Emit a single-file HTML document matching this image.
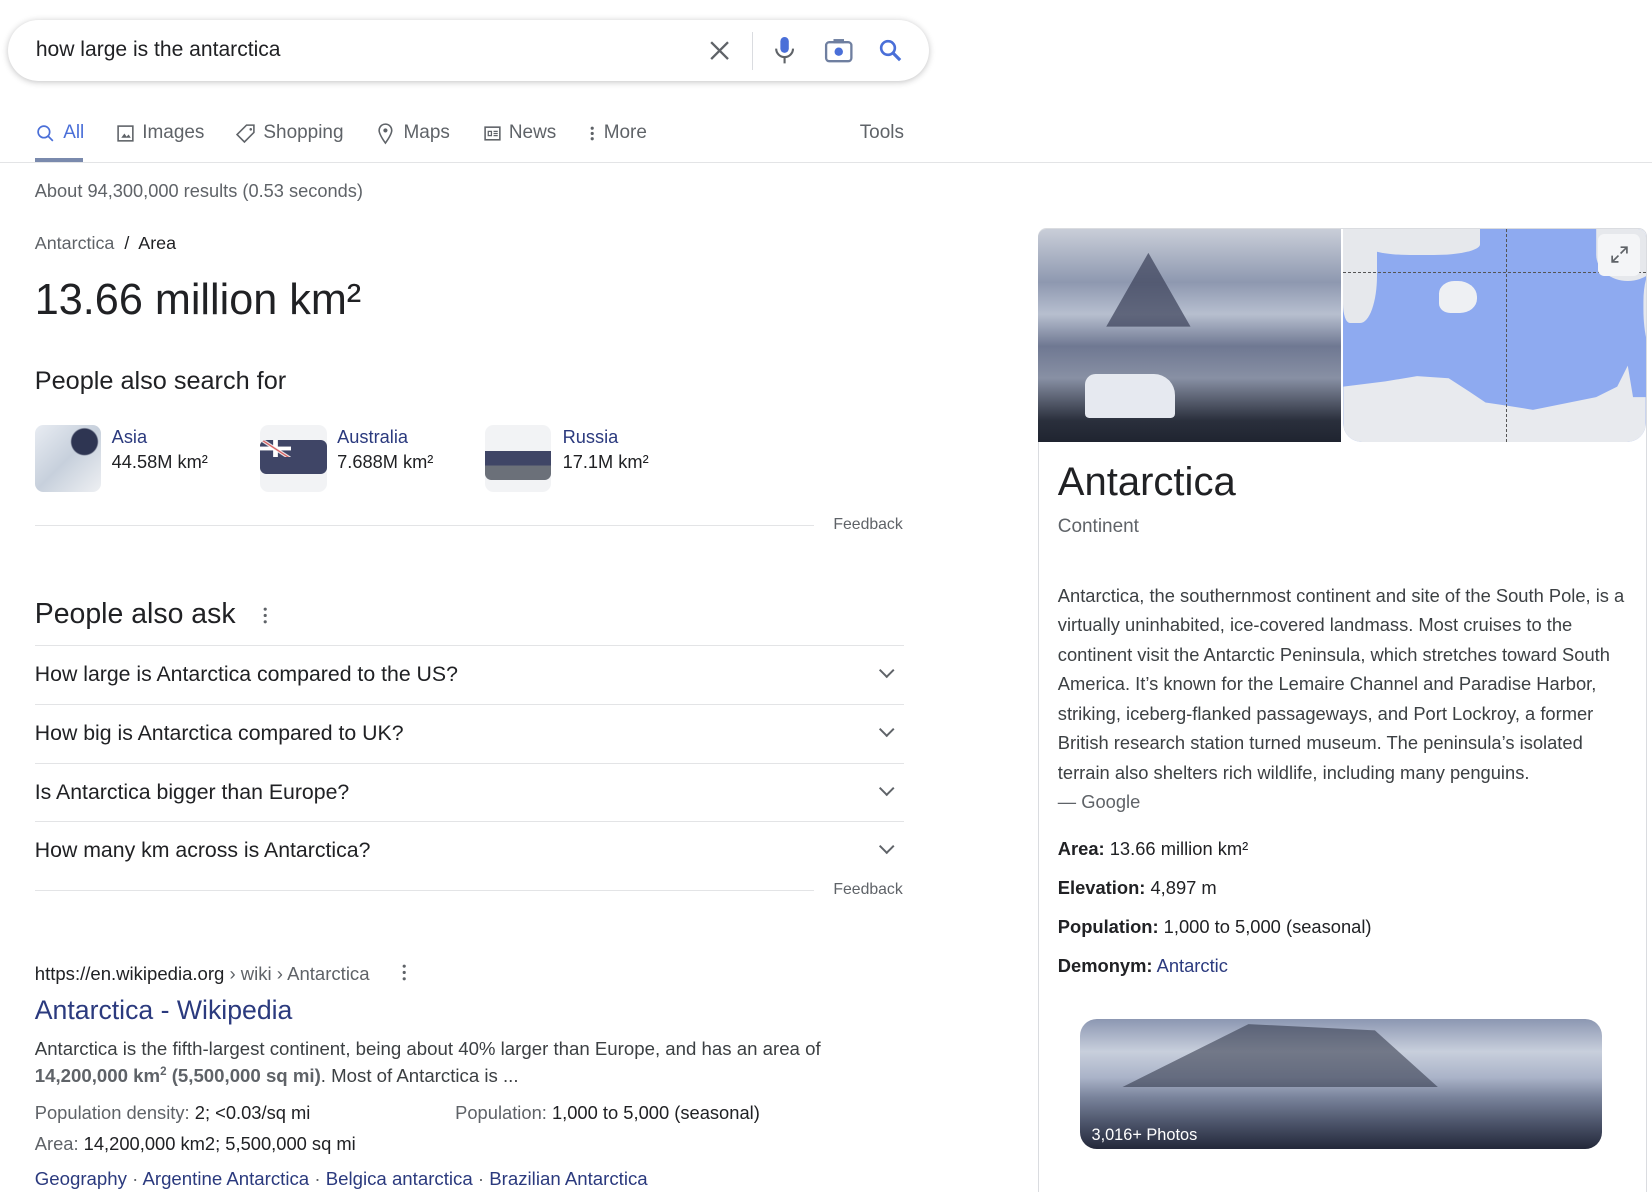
<!DOCTYPE html>
<html><head><meta charset="utf-8"><style>
html,body{margin:0;padding:0;background:#fff;overflow:hidden}
body{width:1568px;height:1131px;zoom:1.05357;position:relative;font-family:"Liberation Sans",Arial,sans-serif;color:#202124}
.a{position:absolute;white-space:nowrap}
.g{color:#5f6368}
.l{color:#2b3a7e}
.hr{position:absolute;height:1px;background:#e3e4e6}
.q{font-size:20.2px}
.chev{position:absolute;left:836px;width:9px;height:9px;border-right:2px solid #5f6368;border-bottom:2px solid #5f6368;transform:rotate(45deg)}
</style></head><body>
<div class="a" style="left:8px;top:19px;width:874px;height:58px;border-radius:29px;box-shadow:0 1px 6px rgba(32,33,36,.28);background:#fff"></div>
<div class="a" style="left:34px;top:36px;font-size:20px">how large is the antarctica</div>
<svg class="a" style="left:672px;top:37px" width="22" height="22" viewBox="0 0 22 22"><path d="M3 3L19 19M19 3L3 19" stroke="#5f6368" stroke-width="2.2"/></svg>
<div class="a" style="left:714px;top:30px;width:1px;height:36px;background:#dadce0"></div>
<svg class="a" style="left:734px;top:34px" width="22" height="28" viewBox="0 0 22 28"><rect x="7" y="1" width="8" height="15" rx="4" fill="#4a6fd8"/><path d="M3 12a8 8 0 0 0 16 0" stroke="#5f6368" stroke-width="2" fill="none"/><path d="M11 20v6" stroke="#5f6368" stroke-width="2"/></svg>
<svg class="a" style="left:782px;top:36px" width="28" height="24" viewBox="0 0 28 24"><rect x="2" y="4" width="24" height="18" rx="3" fill="none" stroke="#6f7fa0" stroke-width="2.2"/><rect x="9" y="1" width="10" height="4" fill="#6f7fa0"/><circle cx="14" cy="13" r="4" fill="#4a6fd8"/></svg>
<svg class="a" style="left:833px;top:36px" width="24" height="24" viewBox="0 0 24 24"><circle cx="9.5" cy="9.5" r="6.5" fill="none" stroke="#4a6fd8" stroke-width="2.5"/><path d="M14.5 14.5L21 21" stroke="#4a6fd8" stroke-width="3"/></svg>

<svg class="a" style="left:34px;top:118px" width="18" height="18" viewBox="0 0 18 18"><circle cx="7.5" cy="7.5" r="5.5" fill="none" stroke="#4a6fd8" stroke-width="1.6"/><path d="M11.5 11.5L16 16" stroke="#4a6fd8" stroke-width="1.6"/></svg>
<div class="a" style="left:60px;top:116px;font-size:18px;color:#4a6fd8">All</div>
<div class="a" style="left:33px;top:150px;width:46px;height:4px;background:#7a8aad"></div>
<svg class="a" style="left:110px;top:118px" width="18" height="18" viewBox="0 0 18 18"><rect x="2" y="2" width="14" height="14" fill="none" stroke="#5f6368" stroke-width="1.5"/><path d="M5 13l3-4 2 3 2-2 2 3z" fill="#5f6368"/></svg>
<div class="a g" style="left:135px;top:116px;font-size:18px">Images</div>
<svg class="a" style="left:224px;top:117px" width="20" height="20" viewBox="0 0 20 20"><path d="M10 2h7v7l-9 9-7-7z" fill="none" stroke="#5f6368" stroke-width="1.5"/><circle cx="14" cy="6" r="1.2" fill="#5f6368"/></svg>
<div class="a g" style="left:250px;top:116px;font-size:18px">Shopping</div>
<svg class="a" style="left:358px;top:116px" width="16" height="22" viewBox="0 0 16 22"><path d="M8 20C3 13 2 10 2 8a6 6 0 0 1 12 0c0 2-1 5-6 12z" fill="none" stroke="#5f6368" stroke-width="1.5"/><circle cx="8" cy="8" r="2" fill="#5f6368"/></svg>
<div class="a g" style="left:383px;top:116px;font-size:18px">Maps</div>
<svg class="a" style="left:458px;top:118px" width="18" height="18" viewBox="0 0 18 18"><rect x="2" y="3" width="14" height="12" fill="none" stroke="#5f6368" stroke-width="1.5"/><path d="M5 7h3v4H5zM10 7h4M10 9h4M10 11h4" stroke="#5f6368" stroke-width="1.2" fill="none"/></svg>
<div class="a g" style="left:483px;top:116px;font-size:18px">News</div>
<svg class="a" style="left:558px;top:118px" width="8" height="18" viewBox="0 0 8 18"><circle cx="4" cy="4" r="1.5" fill="#5f6368"/><circle cx="4" cy="9" r="1.5" fill="#5f6368"/><circle cx="4" cy="14" r="1.5" fill="#5f6368"/></svg>
<div class="a g" style="left:573px;top:116px;font-size:18px">More</div>
<div class="a g" style="left:816px;top:116px;font-size:18px">Tools</div>
<div class="hr" style="left:0;top:154px;width:1568px"></div>

<div class="a g" style="left:33px;top:172px;font-size:17.3px">About 94,300,000 results (0.53 seconds)</div>
<div class="a" style="left:33px;top:221px;font-size:17px"><span class="g">Antarctica</span> &nbsp;/&nbsp; Area</div>
<div class="a" style="left:33px;top:262px;font-size:41px">13.66 million km²</div>
<div class="a" style="left:33px;top:348px;font-size:24px">People also search for</div>

<div class="a" style="left:33px;top:403px;width:63px;height:64px;border-radius:8px;background:radial-gradient(circle at 75% 25%,#2e3552 18%,transparent 20%),linear-gradient(135deg,#e8ecf2,#c7d0dc 50%,#eef0f3)"></div>
<div class="a l" style="left:106px;top:405px;font-size:17.3px">Asia</div>
<div class="a" style="left:106px;top:429px;font-size:17.3px">44.58M km²</div>
<div class="a" style="left:247px;top:403px;width:63px;height:64px;border-radius:8px;background:#f2f3f5"></div>
<div class="a" style="left:247px;top:418px;width:63px;height:32px;border-radius:6px;background:#3f4566"></div>
<div class="a" style="left:247px;top:418px;width:29px;height:16px;background:linear-gradient(33deg,transparent 42%,#fff 45%,#c44 49%,#fff 53%,transparent 56%),linear-gradient(90deg,transparent 42%,#fff 43%,#fff 57%,transparent 58%),linear-gradient(0deg,transparent 38%,#fff 40%,#fff 60%,transparent 62%),#3f4566;border-top-left-radius:6px"></div>
<div class="a l" style="left:320px;top:405px;font-size:17.3px">Australia</div>
<div class="a" style="left:320px;top:429px;font-size:17.3px">7.688M km²</div>
<div class="a" style="left:460px;top:403px;width:63px;height:64px;border-radius:8px;background:#f2f3f5"></div>
<div class="a" style="left:460px;top:428px;width:63px;height:28px;border-radius:0 0 6px 6px;background:linear-gradient(#3f4566 0 50%,#6b7079 50%)"></div>
<div class="a l" style="left:534px;top:405px;font-size:17.3px">Russia</div>
<div class="a" style="left:534px;top:429px;font-size:17.3px">17.1M km²</div>

<div class="hr" style="left:33px;top:498px;width:740px"></div>
<div class="a g" style="left:791px;top:490px;font-size:15px">Feedback</div>

<div class="a" style="left:33px;top:568px;font-size:27px">People also ask</div>
<svg class="a" style="left:248px;top:575px" width="8" height="18" viewBox="0 0 8 18"><circle cx="4" cy="3" r="1.5" fill="#5f6368"/><circle cx="4" cy="9" r="1.5" fill="#5f6368"/><circle cx="4" cy="15" r="1.5" fill="#5f6368"/></svg>
<div class="hr" style="left:33px;top:612px;width:825px"></div>
<div class="a q" style="left:33px;top:628px">How large is Antarctica compared to the US?</div><div class="chev" style="top:631px"></div>
<div class="hr" style="left:33px;top:668px;width:825px"></div>
<div class="a q" style="left:33px;top:684px">How big is Antarctica compared to UK?</div><div class="chev" style="top:687px"></div>
<div class="hr" style="left:33px;top:724px;width:825px"></div>
<div class="a q" style="left:33px;top:740px">Is Antarctica bigger than Europe?</div><div class="chev" style="top:743px"></div>
<div class="hr" style="left:33px;top:779px;width:825px"></div>
<div class="a q" style="left:33px;top:795px">How many km across is Antarctica?</div><div class="chev" style="top:798px"></div>
<div class="hr" style="left:33px;top:845px;width:740px"></div>
<div class="a g" style="left:791px;top:836px;font-size:15px">Feedback</div>

<div class="a" style="left:33px;top:914px;font-size:17.6px">https://en.wikipedia.org<span class="g"> › wiki › Antarctica</span></div>
<svg class="a" style="left:380px;top:914px" width="8" height="18" viewBox="0 0 8 18"><circle cx="4" cy="3" r="1.5" fill="#5f6368"/><circle cx="4" cy="9" r="1.5" fill="#5f6368"/><circle cx="4" cy="15" r="1.5" fill="#5f6368"/></svg>
<div class="a l" style="left:33px;top:944px;font-size:25.3px">Antarctica - Wikipedia</div>
<div class="a" style="left:33px;top:985px;font-size:17.7px;color:#3c4043">Antarctica is the fifth-largest continent, being about 40% larger than Europe, and has an area of</div>
<div class="a" style="left:33px;top:1011px;font-size:17.7px;color:#3c4043"><b style="color:#5f6368">14,200,000 km<sup style="font-size:11px">2</sup> (5,500,000 sq mi)</b>. Most of Antarctica is ...</div>
<div class="a" style="left:33px;top:1046px;font-size:17.4px"><span class="g">Population density:</span> 2; &lt;0.03/sq mi</div>
<div class="a" style="left:432px;top:1046px;font-size:17.4px"><span class="g">Population:</span> 1,000 to 5,000 (seasonal)</div>
<div class="a" style="left:33px;top:1075px;font-size:17.4px"><span class="g">Area:</span> 14,200,000 km2; 5,500,000 sq mi</div>
<div class="a l" style="left:33px;top:1109px;font-size:17.7px">Geography <span class="g">·</span> Argentine Antarctica <span class="g">·</span> Belgica antarctica <span class="g">·</span> Brazilian Antarctica</div>

<div class="a" style="left:985px;top:216px;width:576px;height:940px;border:1px solid #dadce0;border-radius:8px"></div>
<div class="a" style="left:985px;top:217px;width:288px;height:203px;border-top-left-radius:8px;background:linear-gradient(180deg,#c9ced8 0%,#8e98b0 25%,#b7bfcf 40%,#6f7892 55%,#8890a4 70%,#2a2f3c 90%,#1f2430 100%)"></div>
<div class="a" style="left:1050px;top:240px;width:80px;height:70px;background:#3a4058;clip-path:polygon(50% 0,100% 100%,0 100%);opacity:.7"></div>
<div class="a" style="left:1030px;top:355px;width:85px;height:42px;background:#e6e9f0;border-radius:10px 20px 4px 4px"></div>
<div class="a" style="left:1275px;top:217px;width:287px;height:203px;border-radius:0 8px 18px 18px;background:#8eaaf0;overflow:hidden">
<div style="position:absolute;left:0;top:0;width:287px;height:203px;background:#e8eaee;clip-path:polygon(0 150px,40px 145px,70px 140px,100px 142px,120px 155px,135px 165px,155px 168px,180px 172px,210px 166px,240px 160px,260px 150px,270px 130px,275px 160px,287px 160px,287px 203px,0 203px)"></div>
<div style="position:absolute;left:0;top:0;width:32px;height:90px;background:#e6e8ec;border-radius:0 0 50% 20%"></div>
<div style="position:absolute;left:20px;top:0;width:110px;height:25px;background:#e6e8ec;border-radius:0 0 40% 40%"></div>
<div style="position:absolute;left:91px;top:50px;width:36px;height:30px;background:#eef0f3;border-radius:40% 50% 45% 30%"></div>
<div style="position:absolute;left:165px;top:40px;width:22px;height:80px;background:#e6e8ec;border-radius:40% 50% 50% 60%;transform:translateX(120px)"></div>
<div style="position:absolute;left:180px;top:0;width:60px;height:50px;background:#e6e8ec;border-radius:0 0 50% 50%;transform:translateX(60px)"></div>
</div>
<div class="a" style="left:1275px;top:258px;width:287px;border-top:1px dashed #555"></div>
<div class="a" style="left:1429px;top:217px;height:203px;border-left:1px dashed #555"></div>
<div class="a" style="left:1517px;top:222px;width:40px;height:40px;border-radius:6px;background:#f4f5f7"></div>
<svg class="a" style="left:1527px;top:232px" width="20" height="20" viewBox="0 0 20 20"><path d="M11 3h6v6M17 3l-6 6M9 17H3v-6M3 17l6-6" stroke="#5f6368" stroke-width="1.6" fill="none"/></svg>

<div class="a" style="left:1004px;top:437px;font-size:38px">Antarctica</div>
<div class="a g" style="left:1004px;top:490px;font-size:18px">Continent</div>
<div class="a" style="left:1004px;top:551px;width:540px;white-space:normal;font-size:17.4px;line-height:28px;color:#3c4043">Antarctica, the southernmost continent and site of the South Pole, is a virtually uninhabited, ice-covered landmass. Most cruises to the continent visit the Antarctic Peninsula, which stretches toward South America. It’s known for the Lemaire Channel and Paradise Harbor, striking, iceberg-flanked passageways, and Port Lockroy, a former British research station turned museum. The peninsula’s isolated terrain also shelters rich wildlife, including many penguins.</div>
<div class="a g" style="left:1004px;top:751px;font-size:17.4px">— Google</div>
<div class="a" style="left:1004px;top:795px;font-size:17.4px"><b>Area:</b> 13.66 million km²</div>
<div class="a" style="left:1004px;top:832px;font-size:17.4px"><b>Elevation:</b> 4,897 m</div>
<div class="a" style="left:1004px;top:869px;font-size:17.4px"><b>Population:</b> 1,000 to 5,000 (seasonal)</div>
<div class="a" style="left:1004px;top:906px;font-size:17.4px"><b>Demonym:</b> <span class="l">Antarctic</span></div>
<div class="a" style="left:1025px;top:967px;width:496px;height:124px;border-radius:16px;overflow:hidden;background:linear-gradient(180deg,#8c97b2 0%,#c8cfdc 25%,#aab3c8 45%,#7a849c 60%,#4c546a 80%,#23283a 100%)">
<div style="position:absolute;left:40px;top:5px;width:300px;height:60px;background:#2c3144;clip-path:polygon(0 100%,40% 0,80% 10%,100% 100%);opacity:.55"></div>
</div>
<div class="a" style="left:1036px;top:1069px;font-size:15.5px;color:#fff">3,016+ Photos</div>
</body></html>
